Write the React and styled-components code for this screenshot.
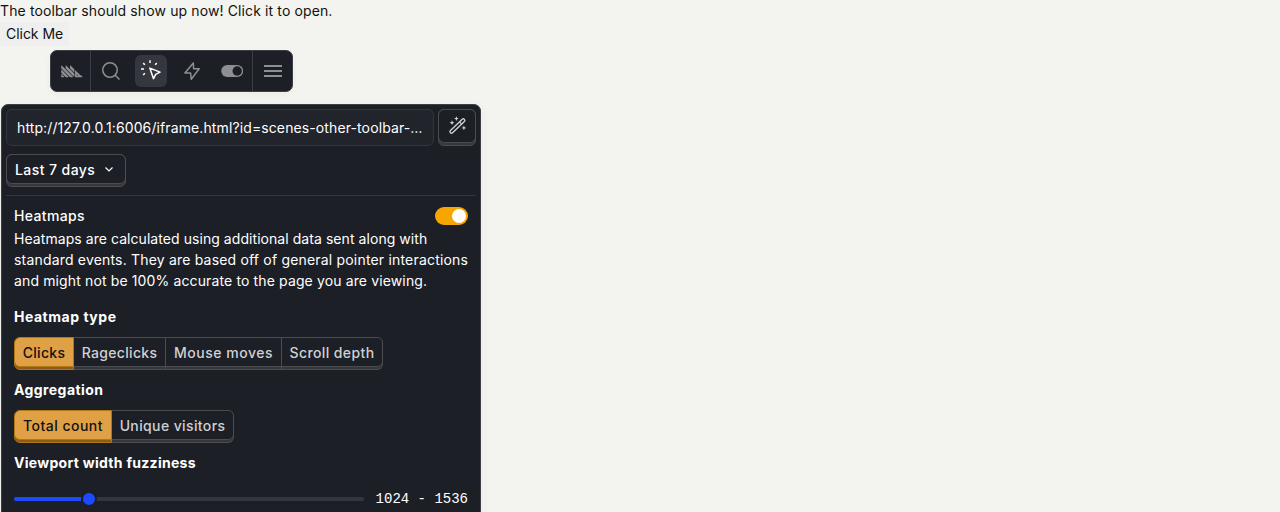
import React from 'react';
import styled, { createGlobalStyle } from 'styled-components';

const GlobalStyle = createGlobalStyle`
  *, *::before, *::after { box-sizing: border-box; }
  html, body { margin: 0; height: 100%; overflow: hidden; }
  body {
    background: #f3f4ef;
    color: #111;
    font-family: Inter, "Liberation Sans", sans-serif;
    font-size: 14px;
    line-height: 22px;
  }
`;

const Page = styled.main`
  display: flex;
  flex-direction: column;
  align-items: flex-start;
  height: 512px;
  overflow: hidden;
`;

const Intro = styled.div`
  letter-spacing: 0.12px;
`;

const StoryButton = styled.button`
  height: 24px;
  padding: 1px 6px;
  border: 0;
  background: #efefef;
  color: #111;
  font: inherit;
  letter-spacing: -0.04px;
`;

const Toolbar = styled.nav`
  display: flex;
  width: 243px;
  height: 42px;
  margin: 4px 0 0 50px;
  border: 1px solid #3d3f45;
  border-radius: 7px;
  background: #1d1f27;
  box-shadow: 0 3px 10px rgba(0, 0, 0, 0.03);
  flex-shrink: 0;
`;

const ToolGroup = styled.div`
  display: flex;
  align-items: center;
  justify-content: ${(p) => (p.$center ? 'center' : 'flex-start')};
  width: ${(p) => p.$width}px;
  border-right: ${(p) => (p.$divided ? '1px solid #3b3d44' : '0')};
`;

const ToolButton = styled.button`
  display: flex;
  align-items: center;
  justify-content: center;
  width: 32px;
  height: 32px;
  margin: 0 4px;
  padding: 0;
  border: 0;
  border-radius: 6px;
  flex-shrink: 0;
  background: ${(p) => (p.$active ? '#35373f' : 'transparent')};
  color: ${(p) => (p.$active ? '#fff' : '#8e8f93')};
`;

const Panel = styled.section`
  width: 480px;
  height: 520px;
  margin: 12px 0 0 1px;
  padding: 4px;
  border: 1px solid #3d3f45;
  border-radius: 7px;
  background: #1d1f27;
  color: #fff;
  box-shadow: 0 3px 10px rgba(0, 0, 0, 0.05);
  flex-shrink: 0;
`;

const UrlRow = styled.div`
  display: flex;
  gap: 4px;
`;

const UrlField = styled.div`
  width: 428px;
  height: 37px;
  padding: 0 10px;
  border: 1px solid #34363e;
  border-radius: 6px;
  background: #22242c;
  line-height: 36px;
  letter-spacing: 0.11px;
  white-space: nowrap;
`;

const Chrome = styled.button`
  display: flex;
  flex-direction: column;
  width: ${(p) => p.$width}px;
  height: ${(p) => p.$height}px;
  padding: 0;
  border: 1px solid #4b4c4f;
  border-radius: 6px;
  background: #37373a;
  color: inherit;
  font: inherit;
  flex-shrink: 0;
`;

const Face = styled.span`
  display: flex;
  align-items: center;
  justify-content: ${(p) => (p.$center ? 'center' : 'flex-start')};
  gap: 7px;
  height: ${(p) => p.$height}px;
  margin: -1px;
  padding: ${(p) => (p.$center ? 0 : '2px 8px 0')};
  border: 1px solid #4b4c4f;
  border-radius: 6px;
  background: #1d1f27;
  font-weight: 500;
  letter-spacing: 0.42px;
  color: ${(p) => (p.$center ? '#d0d1d3' : '#fff')};
`;

const DateRow = styled.div`
  display: flex;
  height: 50px;
  padding-top: 8px;
  border-bottom: 1px solid #35373f;
`;

const Settings = styled.div`
  padding: 8px 8px 0;
`;

const HeatmapHeader = styled.div`
  display: flex;
  align-items: center;
  justify-content: space-between;
  height: 24px;
  font-weight: 500;
  letter-spacing: 0.35px;
`;

const Switch = styled.span`
  display: flex;
  justify-content: flex-end;
  width: 33px;
  height: 18px;
  padding: 2px;
  border-radius: 9px;
  background: #f7a501;
`;

const SwitchKnob = styled.span`
  width: 14px;
  height: 14px;
  border-radius: 50%;
  background: #fff;
`;

const Description = styled.p`
  margin: 0 0 15px;
  line-height: 21px;
  white-space: nowrap;
`;

const Line = styled.span`
  display: block;
  letter-spacing: ${(p) => p.$tracking}px;
`;

const Heading = styled.h3`
  margin: 0;
  height: 21px;
  font-size: 14px;
  line-height: 21px;
  font-weight: 700;
  letter-spacing: ${(p) => p.$tracking}px;
`;

const Segments = styled.div`
  display: flex;
  margin: 10px 0 9px;
`;

const Segment = styled.button`
  width: ${(p) => p.$width}px;
  height: 33px;
  padding: 0 0 2px;
  border: 1px solid ${(p) => (p.$active ? '#b17816' : '#4b4c4f')};
  border-left-width: ${(p) => (p.$first ? '1px' : '0')};
  border-radius: ${(p) => (p.$first ? '6px 0 0 6px' : p.$last ? '0 6px 6px 0' : '0')};
  background: ${(p) => (p.$active ? '#8e5b19' : '#37373a')};
  color: ${(p) => (p.$active ? '#111' : '#d0d1d3')};
  font: inherit;
  overflow: hidden;
`;

const SegmentFace = styled.span`
  display: block;
  height: 29px;
  border-bottom: 1px solid ${(p) => (p.$active ? '#b17816' : '#4b4c4f')};
  border-radius: ${(p) => (p.$first ? '0 0 0 5px' : p.$last ? '0 0 5px 0' : '0')};
  background: ${(p) => (p.$active ? '#e0a045' : '#1d1f27')};
  font-weight: 500;
  line-height: 30px;
  letter-spacing: ${(p) => p.$tracking}px;
  white-space: nowrap;
`;

const SliderRow = styled.div`
  display: flex;
  align-items: center;
  justify-content: space-between;
  height: 30px;
  margin-top: 11px;
`;

const Track = styled.div`
  display: flex;
  align-items: center;
  width: 350px;
  height: 4px;
  border-radius: 2px;
  background: #34363f;
`;

const Filled = styled.div`
  width: 67px;
  height: 4px;
  border-radius: 2px 0 0 2px;
  background: #1d4aff;
`;

const Handle = styled.div`
  width: 16px;
  height: 16px;
  border: 2px solid #1d1f27;
  border-radius: 50%;
  background: #1d4aff;
`;

const Range = styled.span`
  font-family: "Liberation Mono", monospace;
  font-size: 14px;
`;

const Svg = ({ size = 24, children, ...rest }) => (
  <svg width={size} height={size} viewBox={`0 0 ${size} ${size}`} fill="none" stroke="currentColor" strokeWidth="1.5" {...rest}>
    {children}
  </svg>
);

const LogoMark = () => (
  <svg width="24" height="14" viewBox="-5 -1 54.5 31.8" fill="currentColor">
    <path d="M0 23.4082c0-.8909 1.07714-1.3371 1.70711-.7071l4.58338 4.5834c.62997.63.1838 1.7071-.7071 1.7071H1c-.552284 0-1-.4477-1-1v-4.5834Zm0-4.8278c0 .2652.105357.5196.292893.7071l9.411217 9.4112c.18753.1875.44189.2929.70709.2929h5.1692c.8909 0 1.3371-1.0771.7071-1.7071L1.70711 12.7041C1.07714 12.0741 0 12.5203 0 13.4112v5.1692Zm0-9.99701c0 .26521.105357.51957.292893.7071L19.7011 28.6987c.1875.1875.4419.2929.7071.2929h5.1692c.8909 0 1.3371-1.0771.7071-1.7071L1.70711 2.70711C1.07715 2.07715 0 2.52331 0 3.41421v5.16918Zm9.997 0c0 .26521.1054.51957.2929.7071l17.994 17.99401c.63.63 1.7071.1838 1.7071-.7071v-5.1692c0-.2652-.1054-.5196-.2929-.7071l-17.994-17.994c-.63-.62996-1.7071-.18379-1.7071.70711v5.16918Zm11.7041-5.87628c-.63-.62997-1.7071-.1838-1.7071.7071v5.16918c0 .26521.1054.51957.2929.7071l7.997 7.99701c.63.63 1.7071.1838 1.7071-.7071v-5.1692c0-.2652-.1054-.5196-.2929-.7071l-7.997-7.99699Z" />
    <path fillRule="evenodd" d="m42.5248 23.5308-9.4127-9.4127c-.63-.63-1.7071-.1838-1.7071.7071v13.1664c0 .5523.4477 1 1 1h14.5806c.5523 0 1-.4477 1-1v-1.199c0-.5523-.4496-.9934-.9973-1.0647-1.6807-.2188-3.2528-.9864-4.4635-2.1971Zm-6.3213 2.2618c-.8829 0-1.5995-.7166-1.5995-1.5996 0-.8829.7166-1.5995 1.5995-1.5995.883 0 1.5996.7166 1.5996 1.5995 0 .883-.7166 1.5996-1.5996 1.5996Z" />
  </svg>
);

const SearchIcon = () => (
  <Svg><circle cx="11" cy="11" r="7.25" /><path d="m16.2 16.2 4.3 4.3" /></Svg>
);

const ClickIcon = () => (
  <Svg strokeLinejoin="round">
    <path d="m10.8 9.1 10.3 4-4.4 2.2-2.2 4.4Z" />
    <path d="M11 1.2v2.8M2 10h3M4.200 4.100l1.700 1.700M17.800 4.100l-1.700 1.700M4.200 16l1.700-1.700" />
  </Svg>
);

const BoltIcon = () => (
  <Svg strokeLinejoin="round">
    <path d="M14.3 3.9 5.9 14h5.7l.6 6.3 8-10.6h-5.6Z" />
  </Svg>
);

const ToggleIcon = () => (
  <Svg>
    <rect x="2.2" y="6" width="22" height="12" rx="6" fill="currentColor" stroke="none" />
    <circle cx="18.2" cy="12" r="4.7" fill="#1d1f27" stroke="none" />
  </Svg>
);

const MenuIcon = () => (
  <Svg strokeWidth="2"><path d="M3 7h18M3 12h18M3 17h18" /></Svg>
);

const WandIcon = () => (
  <Svg size={20}>
    <path strokeLinecap="round" strokeWidth="4.4" d="M4.500 15.700 16.300 4.400" />
    <path strokeLinecap="round" strokeWidth="1.7" stroke="#1d1f27" d="M4.500 15.700 16.300 4.400" />
    <path strokeWidth="1.1" d="m12.600 6 2.100 2.200" />
    <path fill="currentColor" stroke="none" d="m9.4.2.7 1.700 1.700.7-1.700.7-.7 1.700-.7-1.700-1.700-.7 1.700-.7ZM5 4.300l.7 1.700 1.700.7-1.700.7-.7 1.700-.7-1.700-1.700-.7 1.700-.7ZM16.900 9.500l.7 1.700 1.700.7-1.700.7-.7 1.700-.7-1.700-1.700-.7 1.700-.7Z" />
  </Svg>
);

const ChevronIcon = () => (
  <Svg size={14} strokeWidth="1.2"><path d="M3.5 4.5 7 8l3.5-3.5" /></Svg>
);

const SegmentedControl = ({ options }) => (
  <Segments>
    {options.map(([label, width, tracking], i) => {
      const state = { $active: i === 0, $first: i === 0, $last: i === options.length - 1 };
      return (
        <Segment key={label} $width={width} {...state}>
          <SegmentFace $tracking={tracking} {...state}>{label}</SegmentFace>
        </Segment>
      );
    })}
  </Segments>
);

export default function App() {
  return (
    <Page>
      <GlobalStyle />
      <Intro>The toolbar should show up now! Click it to open.</Intro>
      <StoryButton>Click Me</StoryButton>
      <Toolbar>
        <ToolGroup $width={40} $divided $center><ToolButton><LogoMark /></ToolButton></ToolGroup>
        <ToolGroup $width={162} $divided>
          <ToolButton><SearchIcon /></ToolButton>
          <ToolButton $active><ClickIcon /></ToolButton>
          <ToolButton><BoltIcon /></ToolButton>
          <ToolButton><ToggleIcon /></ToolButton>
        </ToolGroup>
        <ToolGroup $width={39} $center><ToolButton><MenuIcon /></ToolButton></ToolGroup>
      </Toolbar>
      <Panel>
        <UrlRow>
          <UrlField>http://127.0.0.1:6006/iframe.html?id=scenes-other-toolbar-…</UrlField>
          <Chrome $width={38} $height={37}><Face $height={34} $center><WandIcon /></Face></Chrome>
        </UrlRow>
        <DateRow>
          <Chrome $width={120} $height={33}><Face $height={30}>Last 7 days<ChevronIcon /></Face></Chrome>
        </DateRow>
        <Settings>
          <HeatmapHeader>Heatmaps<Switch><SwitchKnob /></Switch></HeatmapHeader>
          <Description>
            <Line $tracking={0.06}>Heatmaps are calculated using additional data sent along with</Line>
            <Line $tracking={0.185}>standard events. They are based off of general pointer interactions</Line>
            <Line $tracking={0.13}>and might not be 100% accurate to the page you are viewing.</Line>
          </Description>
          <Heading $tracking={0.52}>Heatmap type</Heading>
          <SegmentedControl options={[['Clicks', 60, 0.28], ['Rageclicks', 92, 0.33], ['Mouse moves', 116, 0.52], ['Scroll depth', 101, 0.4]]} />
          <Heading $tracking={0.42}>Aggregation</Heading>
          <SegmentedControl options={[['Total count', 98, 0.48], ['Unique visitors', 122, 0.38]]} />
          <Heading $tracking={0.29}>Viewport width fuzziness</Heading>
          <SliderRow>
            <Track><Filled /><Handle /></Track>
            <Range>1024 - 1536</Range>
          </SliderRow>
        </Settings>
      </Panel>
    </Page>
  );
}
